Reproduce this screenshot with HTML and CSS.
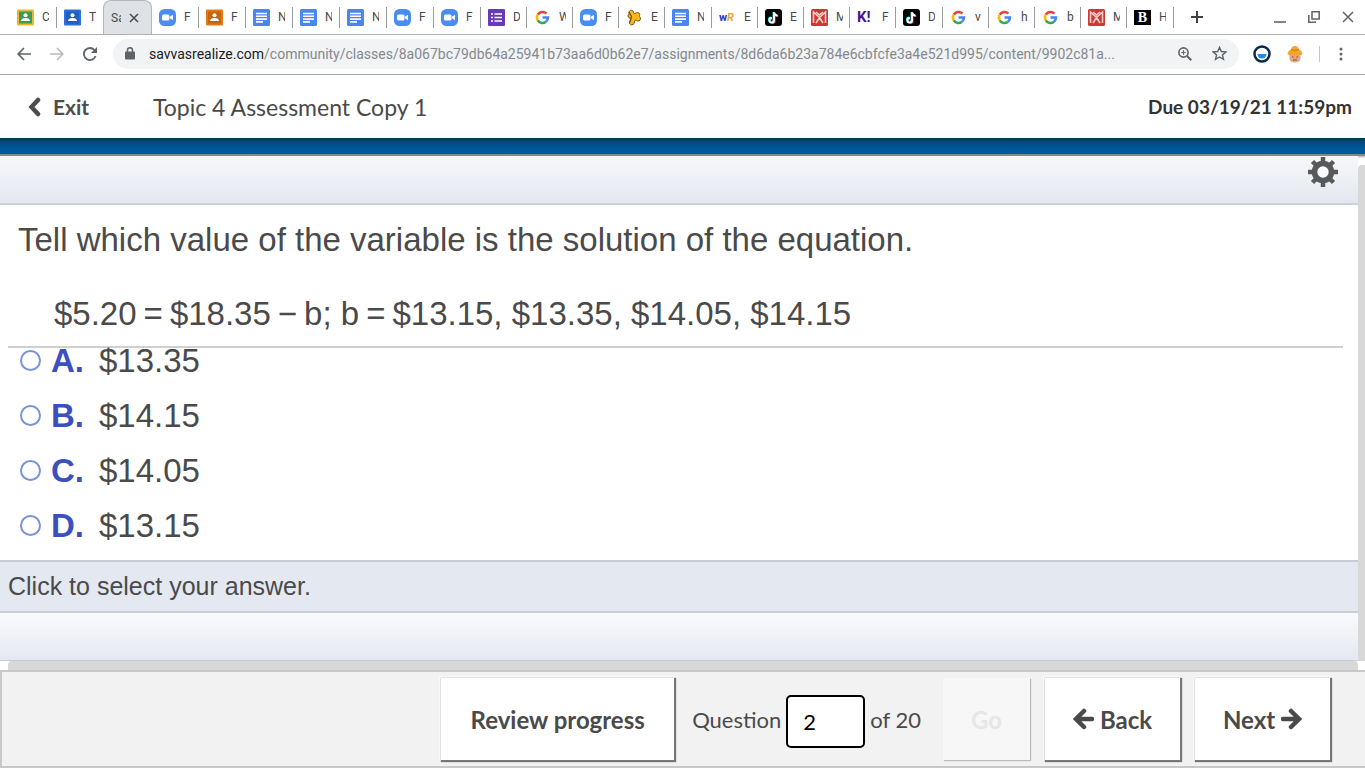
FILE: index.html
```html
<!DOCTYPE html>
<html lang="en">
<head>
  <meta charset="UTF-8">
  <meta name="viewport" content="width=device-width, initial-scale=1.0">
  <title>Topic 4 Assessment Copy 1</title>
  <link rel="stylesheet" href="styles.css">
</head>
<body>
  <svg class="hidden">
    <symbol id="classroom" viewBox="0 0 17 16">
      <rect width="17" height="16" rx="1" fill="currentColor"/>
      <rect x="2" y="2" width="13" height="12" class="board"/>
      <circle cx="8.5" cy="5.8" r="2" fill="#fff"/>
      <path d="M4 11.500c0-2 2-3 4.500-3s4.500 1 4.500 3z" fill="#fff"/>
    </symbol>
    <symbol id="zoom" viewBox="0 0 17 17">
      <rect width="17" height="17" rx="5.500" fill="#4a8cf2"/>
      <rect x="3" y="5.500" width="7.500" height="6" rx="1.500" fill="#fff"/>
      <path d="M11 7.700l3-2v5.600l-3-2z" fill="#fff"/>
    </symbol>
    <symbol id="docs" viewBox="0 0 17 17">
      <rect width="17" height="17" rx="1.500" fill="#4687f1"/>
      <path d="M3 4.500h11M3 7.300h11M3 10.100h11M3 12.900h7" stroke="#fff" stroke-width="1.600"/>
    </symbol>
    <symbol id="forms" viewBox="0 0 17 17">
      <rect width="17" height="17" rx="1" fill="#673ab7"/>
      <path d="M3 5h2M3 8.500h2M3 12h2M6.500 5H14M6.500 8.500H14M6.500 12H14" stroke="#fff" stroke-width="1.700"/>
    </symbol>
    <symbol id="google" viewBox="0 0 17 17">
      <g fill="none" stroke-width="2.500">
        <path d="M3.700 5.700A5.500 5.500 0 0 1 12.400 4.600" stroke="#ea4335"/>
        <path d="M3.700 11.300A5.500 5.500 0 0 1 3.700 5.700" stroke="#fbbc05"/>
        <path d="M12 12.700A5.500 5.500 0 0 1 3.700 11.300" stroke="#34a853"/>
        <path d="M8.500 8.500H14A5.500 5.500 0 0 1 12 12.700" stroke="#4285f4"/>
      </g>
    </symbol>
    <symbol id="puzzle" viewBox="0 0 17 17">
      <path d="M3 3.500C3 .5 7.500.5 7.500 3.500c0 1.500 1.500 1 2.500.5 2-1 4.500 0 3.500 2.500-.5 1.500 1 1 1 3 0 2.500-2.500 3-4 2-1.500-.8-2 0-2 1.500C8.500 16 4 17 3.500 14c-.3-2 1.500-2.500 1-4C4 8.500 2 9 2 7s1.500-2 1-3.500z" fill="#f9b91a" stroke="#7a5210"/>
      <path d="M3 3l2.500 4.500L4 13" fill="none" stroke="#7a5210" stroke-width="1.300"/>
    </symbol>
    <symbol id="tiktok" viewBox="0 0 17 17">
      <rect width="17" height="17" rx="3" fill="#050505"/>
      <g fill="none" stroke-width="1.800">
        <path d="M8.500 3v7.800a2.300 2.300 0 1 1-2.300-2.300M8.500 3c.3 2 1.500 3 3.500 3.200" stroke="#25f4ee"/>
        <path d="M9.700 4v7.800a2.300 2.300 0 1 1-2.300-2.300M9.700 4c.3 2 1.500 3 3.500 3.200" stroke="#fe2c55"/>
        <path d="M9.100 3.500v7.800a2.300 2.300 0 1 1-2.300-2.300M9.100 3.500c.3 2 1.500 3 3.500 3.200" stroke="#fff"/>
      </g>
    </symbol>
    <symbol id="mathxl" viewBox="0 0 17 17">
      <rect width="17" height="17" rx="1.500" fill="#cf3732"/>
      <path d="M2.500 14V3l6 5.500L14.500 3v11M5 14l3.500-5.500L12 14M5 3l3.500 3L12 3" fill="none" stroke="#f5d0cd" stroke-width="1.600"/>
    </symbol>
  </svg>

  <nav class="tabs">
    <div class="tab"><svg class="fav green"><use href="#classroom"/></svg><span>C</span></div>
    <div class="tab"><svg class="fav blue"><use href="#classroom"/></svg><span>T</span></div>
    <div class="tab active">
      <span>Sa</span>
      <button class="icon-btn" aria-label="Close tab"><svg width="10" height="10" viewBox="0 0 10 10"><path d="M1 1l8 8M9 1l-8 8" stroke="#4b4f53" stroke-width="1.600"/></svg></button>
    </div>
    <div class="tab"><svg class="fav"><use href="#zoom"/></svg><span>F</span></div>
    <div class="tab"><svg class="fav orange"><use href="#classroom"/></svg><span>F</span></div>
    <div class="tab"><svg class="fav"><use href="#docs"/></svg><span>N</span></div>
    <div class="tab"><svg class="fav"><use href="#docs"/></svg><span>N</span></div>
    <div class="tab"><svg class="fav"><use href="#docs"/></svg><span>N</span></div>
    <div class="tab"><svg class="fav"><use href="#zoom"/></svg><span>F</span></div>
    <div class="tab"><svg class="fav"><use href="#zoom"/></svg><span>F</span></div>
    <div class="tab"><svg class="fav"><use href="#forms"/></svg><span>D</span></div>
    <div class="tab"><svg class="fav"><use href="#google"/></svg><span>W</span></div>
    <div class="tab"><svg class="fav"><use href="#zoom"/></svg><span>F</span></div>
    <div class="tab"><svg class="fav"><use href="#puzzle"/></svg><span>E</span></div>
    <div class="tab"><svg class="fav"><use href="#docs"/></svg><span>N</span></div>
    <div class="tab"><b class="fav wr">w<i>R</i></b><span>E</span></div>
    <div class="tab"><svg class="fav"><use href="#tiktok"/></svg><span>E</span></div>
    <div class="tab"><svg class="fav"><use href="#mathxl"/></svg><span>M</span></div>
    <div class="tab"><b class="fav kahoot">K!</b><span>F</span></div>
    <div class="tab"><svg class="fav"><use href="#tiktok"/></svg><span>D</span></div>
    <div class="tab"><svg class="fav"><use href="#google"/></svg><span>v</span></div>
    <div class="tab"><svg class="fav"><use href="#google"/></svg><span>h</span></div>
    <div class="tab"><svg class="fav"><use href="#google"/></svg><span>b</span></div>
    <div class="tab"><svg class="fav"><use href="#mathxl"/></svg><span>M</span></div>
    <div class="tab"><b class="fav bold-b">B</b><span>H</span></div>
    <button class="icon-btn new-tab" aria-label="New tab"><svg width="14" height="14" viewBox="0 0 14 14"><path d="M7 1v12M1 7h12" stroke="#3c4043" stroke-width="2"/></svg></button>
    <div class="window-btns">
      <button class="icon-btn" aria-label="Minimize"><svg width="12" height="12" viewBox="0 0 12 12"><path d="M0 11h12" stroke="#5f6368" stroke-width="1.600"/></svg></button>
      <button class="icon-btn" aria-label="Restore"><svg width="12" height="12" viewBox="0 0 12 12"><path d="M4 .8h7.200V8H4zM.8 4v7.200H8" fill="none" stroke="#5f6368" stroke-width="1.500"/></svg></button>
      <button class="icon-btn" aria-label="Close"><svg width="12" height="12" viewBox="0 0 12 12"><path d="M1 1l10 10M11 1L1 11" stroke="#5f6368" stroke-width="1.500"/></svg></button>
    </div>
  </nav>

  <div class="toolbar">
    <button class="icon-btn" aria-label="Back"><svg width="14" height="14" viewBox="0 0 14 14"><path d="M14 7H1.500M7 1L1.200 7 7 13" fill="none" stroke="#5f6368" stroke-width="1.700"/></svg></button>
    <button class="icon-btn" aria-label="Forward"><svg width="14" height="14" viewBox="0 0 14 14"><path d="M0 7h12.500M7 1l5.800 6L7 13" fill="none" stroke="#babcbe" stroke-width="1.700"/></svg></button>
    <button class="icon-btn" aria-label="Reload"><svg width="14" height="14" viewBox="0 0 14 14"><path d="M12.600 9A6 6 0 1 1 11.500 3.100" fill="none" stroke="#5f6368" stroke-width="1.800"/><path d="M14 0v6H8z" fill="#5f6368"/></svg></button>
    <div class="address">
      <svg width="10" height="13" viewBox="0 0 10 13"><rect y="4.500" width="10" height="8" rx="1" fill="#5f6368"/><path d="M2.500 5V3.300a2.500 2.500 0 0 1 5 0V5" fill="none" stroke="#5f6368" stroke-width="1.500"/></svg>
      <div class="url"><span>savvasrealize.com</span>/community/classes/8a067bc79db64a25941b73aa6d0b62e7/assignments/8d6da6b23a784e6cbfcfe3a4e521d995/content/9902c81a...</div>
      <svg width="14" height="14" viewBox="0 0 14 14"><circle cx="5.500" cy="5.500" r="4.600" fill="none" stroke="#5f6368" stroke-width="1.600"/><path d="M9 9l4.300 4.300" stroke="#5f6368" stroke-width="2"/><path d="M5.500 3.300v4.400M3.300 5.500h4.400" stroke="#5f6368" stroke-width="1.100"/></svg>
      <svg width="15" height="15" viewBox="0 0 15 15"><path d="M7.500 1.300l1.800 4.200 4.600.4-3.500 3 1.100 4.500-4-2.400-4 2.400 1.100-4.500-3.500-3 4.600-.4z" fill="none" stroke="#5f6368" stroke-width="1.400"/></svg>
    </div>
    <div class="extensions">
      <svg width="18" height="18" viewBox="0 0 18 18"><circle cx="9" cy="9" r="7.500" fill="#fff" stroke="#0b2a4a" stroke-width="2.500"/><path d="M4.500 9h9a4.500 4.500 0 0 1-9 0z" fill="#1a8cf0"/></svg>
      <svg width="16" height="18" viewBox="0 0 16 18"><path d="M2.500 9h11v4.500c0 2.500-2 4-5.500 4s-5.500-1.500-5.500-4z" fill="#e5a883"/><path d="M.5 9C1 6 3 5 4 4.500 4.500 2 6 1 8 1s3.500 1 4 3.500C13 5 15 6 15.500 9 14 11 2 11 .5 9z" fill="#f3a52b"/><path d="M4 4.500c2 1 6 1 8 0" stroke="#c87817" fill="none"/><path d="M5 12h1.500M9.500 12H11M6 15h4" stroke="#8a4b35" stroke-width="1.200"/></svg>
      <span class="divider"></span>
    </div>
    <button class="icon-btn" aria-label="Menu"><svg width="4" height="14" viewBox="0 0 4 14"><g fill="#5f6368"><circle cx="2" cy="2" r="1.500"/><circle cx="2" cy="7" r="1.500"/><circle cx="2" cy="12" r="1.500"/></g></svg></button>
  </div>

  <header class="app-header">
    <a class="exit" href="#"><svg width="13" height="20" viewBox="0 0 13 20"><path d="M10 3L3.500 10l6.500 7" fill="none" stroke="#4d4d4d" stroke-width="4.500" stroke-linecap="round"/></svg>Exit</a>
    <h1>Topic 4 Assessment Copy 1</h1>
    <div class="due">Due 03/19/21 11:59pm</div>
  </header>
  <div class="blue-bar"></div>

  <main class="player">
    <div class="content">
      <div class="tools">
        <button class="icon-btn" aria-label="Settings"><svg width="30" height="30" viewBox="-15 -15 30 30"><g stroke="#58595b" stroke-width="4.500"><path d="M0-15V-8M0 8V15M-15 0H-8M8 0H15M-10.500-10.500L-6-6M6 6L10.500 10.500M-10.500 10.500L-6 6M6-6L10.500-10.500"/><circle r="8.500" fill="#fff" stroke-width="5.600"/></g></svg></button>
      </div>
      <section class="question">
        <p>Tell which value of the variable is the solution of the equation.</p>
        <p class="equation">$5.20<span>=</span>$18.35<span>−</span>b; b<span>=</span>$13.15, $13.35, $14.05, $14.15</p>
      </section>
      <form class="choices">
        <label class="choice"><input type="radio" name="answer"><b>A.</b>$13.35</label>
        <label class="choice"><input type="radio" name="answer"><b>B.</b>$14.15</label>
        <label class="choice"><input type="radio" name="answer"><b>C.</b>$14.05</label>
        <label class="choice"><input type="radio" name="answer"><b>D.</b>$13.15</label>
      </form>
      <div class="hint">Click to select your answer.</div>
      <div class="strip"></div>
      <div class="scroll-x"></div>
    </div>
    <div class="scroll-y"></div>
  </main>

  <footer class="nav-bar">
    <button class="nav-btn review">Review progress</button>
    <div class="jump">
      <label for="question-no">Question</label>
      <input type="text" id="question-no" value="2">
      <span>of 20</span>
    </div>
    <button class="nav-btn go" disabled>Go</button>
    <button class="nav-btn"><svg width="21" height="22" viewBox="0 0 21 22"><path d="M19 11H5M11 3l-8 8 8 8" fill="none" stroke="#4a4a4a" stroke-width="4.500" stroke-linecap="round"/></svg>Back</button>
    <button class="nav-btn">Next<svg width="21" height="22" viewBox="0 0 21 22"><path d="M2 11h14M10 3l8 8-8 8" fill="none" stroke="#4a4a4a" stroke-width="4.500" stroke-linecap="round"/></svg></button>
  </footer>
</body>
</html>
```

FILE: styles.css
```css
* {
  box-sizing: border-box;
}
body {
  margin: 0;
  min-height: 100vh;
  display: flex;
  flex-direction: column;
  background: #fff;
  color: #4a4a4a;
  font-family: 'Liberation Sans', Arial, sans-serif;
}
svg {
  display: block;
  flex-shrink: 0;
}
.hidden {
  position: absolute;
  width: 0;
  height: 0;
}
.icon-btn {
  display: flex;
  padding: 0;
  border: 0;
  background: none;
  cursor: pointer;
}

/* browser tabs */
.tabs {
  display: flex;
  align-items: center;
  height: 35px;
  padding-left: 10px;
  border-bottom: 1px solid #b0b0b0;
  font-family: Roboto, sans-serif;
  font-size: 12px;
  color: #45494d;
}
.tab {
  display: flex;
  align-items: center;
  gap: 8px;
  width: 47px;
  height: 21px;
  padding-left: 7px;
  border-right: 1px solid #9a9da0;
}
.tab:nth-child(n+11) {
  width: 46px;
}
.tab:nth-child(5n) {
  width: 47px;
}
.tab span {
  width: 7px;
  overflow: hidden;
}
.tab:nth-child(2) {
  border-right: 0;
}
.tab.active {
  align-self: flex-end;
  width: 49px;
  height: 34px;
  margin-left: -1px;
  padding-left: 7px;
  border: 1px solid #b4b7ba;
  border-bottom: 0;
  border-radius: 8px 8px 0 0;
  background: #dee1e6;
}
.tab.active span {
  width: 10px;
}
.fav {
  flex-shrink: 0;
  width: 17px;
  height: 17px;
  line-height: 17px;
}
.green {
  color: #e8b92c;
  fill: #3f9b53;
}
.blue {
  color: #2a6fdb;
  fill: #1e5fc4;
}
.orange {
  color: #e07a16;
  fill: #c8640c;
}
.wr {
  font-size: 11px;
  color: #2a2fd0;
}
.wr i {
  color: #eda23c;
}
.kahoot {
  font-size: 15px;
  color: #46178f;
}
.bold-b {
  height: 15px;
  line-height: 15px;
  background: #000;
  color: #fff;
  font-family: 'Liberation Serif', serif;
  font-size: 14px;
  text-align: center;
}
.new-tab {
  margin-left: 16px;
}
.window-btns {
  display: flex;
  gap: 22px;
  margin-left: auto;
  padding-right: 11px;
}

/* address row */
.toolbar {
  display: flex;
  align-items: center;
  gap: 19px;
  height: 40px;
  padding: 0 22px 2px 17px;
  border-bottom: 1px solid #a8a8a8;
}
.address {
  flex: 1;
  display: flex;
  align-items: center;
  min-width: 0;
  height: 30px;
  margin: 0 -5px 0 -3px;
  padding: 0 12px;
  gap: 14px;
  border-radius: 15px;
  background: #f1f3f4;
}
.address svg:last-child {
  margin-left: 6px;
}
.url {
  flex: 1;
  overflow: hidden;
  white-space: nowrap;
  font-family: Roboto, sans-serif;
  font-size: 14px;
  color: #85898d;
}
.url span {
  color: #202124;
}
.extensions {
  display: flex;
  align-items: center;
  gap: 16px;
}
.divider {
  width: 1px;
  height: 16px;
  background: #c4c6c8;
}

/* assessment header */
.app-header {
  display: flex;
  align-items: center;
  height: 63px;
  padding: 0 13px 0 28px;
  font-family: Lato, sans-serif;
}
.exit {
  display: flex;
  align-items: center;
  gap: 12px;
  width: 125px;
  color: #4d4d4d;
  font-size: 21px;
  font-weight: bold;
  text-decoration: none;
}
.app-header h1 {
  margin: 0;
  font-size: 23px;
  font-weight: normal;
}
.due {
  margin-left: auto;
  color: #333;
  font-size: 19px;
  font-weight: bold;
}
.blue-bar {
  height: 18px;
  border-bottom: 2px solid #7d8c92;
  background: linear-gradient(#003b52, #00508c 6px, #005da3);
  box-shadow: 0 1px 2px #aaa;
}

/* player */
.player {
  flex: 1;
  display: flex;
}
.content {
  flex: 1;
  display: flex;
  flex-direction: column;
}
.tools {
  display: flex;
  justify-content: flex-end;
  height: 49px;
  padding: 1px 20px 0;
  border-bottom: 2px solid #cdd1d8;
  background: linear-gradient(#f8f8fa, #e4e7f0);
}
.question {
  margin: 0 15px 0 8px;
  padding: 16px 10px 13px;
  border-bottom: 2px solid #cfcfcf;
  font-size: 33px;
  line-height: 38px;
}
.question p {
  margin: 0;
}
.question .equation {
  margin: 36px 0 0 36px;
}
.equation span {
  margin: 0 7px;
}
.choices {
  flex: 1;
  padding-left: 20px;
  font-size: 33px;
}
.choice {
  display: flex;
  align-items: center;
  height: 26px;
  margin-bottom: 29px;
}
.choice:last-child {
  margin-bottom: 20px;
}
.choice input {
  appearance: none;
  width: 21px;
  height: 21px;
  margin: 0 10px 2px 0;
  border: 2px solid #7b92d8;
  border-radius: 50%;
  background: #fff;
}
.choice input:checked {
  background: #3c4fc0;
}
.choice b {
  width: 48px;
  color: #3c4fc0;
}
.hint {
  height: 53px;
  padding: 0 8px;
  border: solid #c8ccd6;
  border-width: 2px 0;
  background: #e4e8f1;
  font-size: 25px;
  line-height: 48px;
}
.strip {
  height: 48px;
  border-bottom: 1px solid #c8ccd6;
  background: linear-gradient(#fbfbfd, #e5e8f1);
}
.scroll-x {
  height: 9px;
  margin-left: 8px;
  border-radius: 4px 4px 0 0;
  background: #d8d8d8;
}
.scroll-y {
  width: 7px;
  margin: 9px 0;
  border-radius: 4px 0 0 0;
  background: #d8d8d8;
}

/* bottom navigation */
.nav-bar {
  display: flex;
  align-items: center;
  justify-content: flex-end;
  height: 98px;
  padding-right: 35px;
  border: 2px solid #c8c8c8;
  border-right: 0;
  background: #f2f2f2;
  font-family: Lato, sans-serif;
}
.nav-btn {
  display: flex;
  align-items: center;
  justify-content: center;
  gap: 6px;
  width: 135px;
  height: 82px;
  margin-left: 15px;
  padding: 0;
  border: 0;
  background: #fff;
  box-shadow: 1px 1px 1px 1px #777, -1px -1px 0 1px #f8f8f8;
  color: #4a4a4a;
  font-family: inherit;
  font-size: 24px;
  font-weight: bold;
  cursor: pointer;
}
.nav-btn.review {
  width: 233px;
}
.nav-btn.go {
  width: 87px;
  margin-left: 22px;
  background: #f7f7f7;
  box-shadow: 1px 1px 1px #bbb;
  color: #e6e6e6;
}
.jump {
  display: flex;
  align-items: center;
  gap: 5px;
  margin-left: 18px;
  font-size: 22px;
}
.jump input {
  width: 79px;
  height: 53px;
  margin-top: 4px;
  padding: 0 15px;
  border: 2px solid #000;
  border-radius: 5px;
  background: #fff;
  color: #000;
  font-family: inherit;
  font-size: 22px;
}
```
